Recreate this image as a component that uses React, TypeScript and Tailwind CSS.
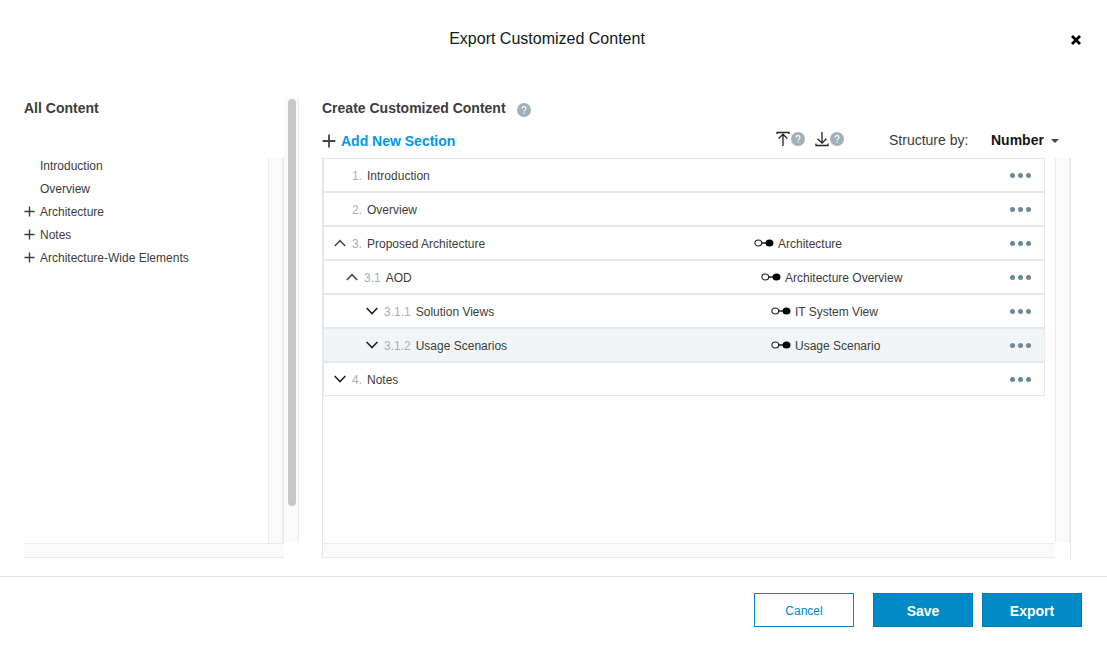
import { useState } from "react";

type TreeItem = { label: string; expandable: boolean };

type Section = {
  number: string;
  title: string;
  level: 0 | 1 | 2;
  toggle?: "open" | "closed";
  mapping?: string;
  selected?: boolean;
};

const treeItems: TreeItem[] = [
  { label: "Introduction", expandable: false },
  { label: "Overview", expandable: false },
  { label: "Architecture", expandable: true },
  { label: "Notes", expandable: true },
  { label: "Architecture-Wide Elements", expandable: true },
];

const sections: Section[] = [
  { number: "1.", title: "Introduction", level: 0 },
  { number: "2.", title: "Overview", level: 0 },
  { number: "3.", title: "Proposed Architecture", level: 0, toggle: "open", mapping: "Architecture" },
  { number: "3.1", title: "AOD", level: 1, toggle: "open", mapping: "Architecture Overview" },
  { number: "3.1.1", title: "Solution Views", level: 2, toggle: "closed", mapping: "IT System View" },
  { number: "3.1.2", title: "Usage Scenarios", level: 2, toggle: "closed", mapping: "Usage Scenario", selected: true },
  { number: "4.", title: "Notes", level: 0, toggle: "closed" },
];

const titleIndent = ["pl-[10px]", "pl-[22px]", "pl-[42px]"];
const mappingIndent = ["pl-0", "pl-[7px]", "pl-[17px]"];

function PlusIcon({ className }: { className: string }) {
  return (
    <svg viewBox="0 0 14 14" className={className} fill="none" stroke="currentColor" strokeWidth="1.8" aria-hidden="true">
      <path d="M7 .6v12.8M.6 7h12.8" />
    </svg>
  );
}

function Chevron({ open }: { open: boolean }) {
  return (
    <svg
      viewBox="0 0 12 8"
      className={open ? "h-2 w-3 text-[#4a4a4a]" : "h-2 w-3 text-[#1c2424]"}
      fill="none"
      stroke="currentColor"
      strokeWidth="1.6"
      aria-hidden="true"
    >
      <path d={open ? "M0.8 7 6 1.6 11.2 7" : "M0.6 1 6 6.6 11.4 1"} />
    </svg>
  );
}

function LinkIcon() {
  return (
    <svg viewBox="0 0 20 8" className="h-2 w-5 shrink-0" aria-hidden="true">
      <ellipse cx="4.3" cy="4" rx="3.4" ry="3" fill="#fff" stroke="#222" strokeWidth="1.1" />
      <path d="M7.8 4h5" stroke="#000" strokeWidth="1.3" />
      <ellipse cx="15.5" cy="4" rx="4" ry="3.6" fill="#000" />
    </svg>
  );
}

function HelpBadge({ label }: { label: string }) {
  return (
    <button type="button" aria-label={label} className="block h-[14px] w-[14px] shrink-0">
      <svg viewBox="0 0 14 14" className="h-full w-full" fill="none">
        <circle cx="7" cy="7" r="7" fill="#a1b0b9" />
        <path
          d="M5 5.6c0-1.3.8-2 2-2s2 .7 2 1.8c0 1.5-1.9 1.4-1.9 3"
          stroke="#fff"
          strokeWidth="1.1"
        />
        <circle cx="7.1" cy="10.1" r="0.7" fill="#fff" />
      </svg>
    </button>
  );
}

function ImportIcon() {
  return (
    <svg viewBox="0 0 14 16" className="h-4 w-[14px]" fill="none" stroke="#222" strokeWidth="1.3" aria-hidden="true">
      <path d="M1 3V1.5h12V3M7 15V3.4M2.6 7.6 7 3.2l4.4 4.4" />
    </svg>
  );
}

function ExportIcon() {
  return (
    <svg viewBox="0 0 14 16" className="h-4 w-[14px]" fill="none" stroke="#222" strokeWidth="1.3" aria-hidden="true">
      <path d="M1 12.6v1.9h12v-1.9M7 1v11.2M2.6 7.8 7 12.2l4.4-4.4" />
    </svg>
  );
}

function HorizontalTrack() {
  return <div className="h-[15px] shrink-0 border-y border-[#ebebeb] bg-[#fafafa]" />;
}

function SectionRow({ section }: { section: Section }) {
  return (
    <li
      className={
        section.selected
          ? "flex h-[34px] items-center border border-[#e4e9ec] bg-[#f1f5f7]"
          : "flex h-[34px] items-center border border-[#e4e9ec] bg-white"
      }
    >
      <div className={`flex min-w-0 flex-1 items-center ${titleIndent[section.level]}`}>
        {section.toggle ? (
          <button
            type="button"
            aria-label={section.toggle === "open" ? `Collapse ${section.title}` : `Expand ${section.title}`}
            aria-expanded={section.toggle === "open"}
            className="w-3"
          >
            <Chevron open={section.toggle === "open"} />
          </button>
        ) : (
          <span className="w-3" />
        )}
        <span className="ml-[6px] pt-[2px] text-[#a9b0b3]">{section.number}</span>
        <span className="ml-[5px] pt-[2px]">{section.title}</span>
      </div>
      <div className={`flex w-[254px] items-center gap-1 ${mappingIndent[section.level]}`}>
        {section.mapping && (
          <>
            <LinkIcon />
            <span className="pt-[2px]">{section.mapping}</span>
          </>
        )}
      </div>
      <button type="button" aria-label={`Options for ${section.title}`} className="mr-3 flex w-6 items-center justify-center gap-[3px]">
        <span className="h-[5px] w-[5px] rounded-full bg-[#6c8796]" />
        <span className="h-[5px] w-[5px] rounded-full bg-[#6c8796]" />
        <span className="h-[5px] w-[5px] rounded-full bg-[#6c8796]" />
      </button>
    </li>
  );
}

export default function App() {
  const [structure, setStructure] = useState("Number");

  return (
    <div
      role="dialog"
      aria-labelledby="dialog-title"
      className="flex min-h-screen flex-col bg-white font-['Liberation_Sans',Arial,sans-serif] text-xs text-[#3c3c3c]"
    >
      <header className="flex items-start pt-7 pr-[21px] pl-6">
        <h1 id="dialog-title" className="flex-1 pt-px pl-1 text-center text-base leading-5 text-[#101818]">
          Export Customized Content
        </h1>
        <button type="button" aria-label="Close" className="flex h-6 w-5 items-center justify-center">
          <svg viewBox="0 0 10 10" className="h-[10px] w-[10px]" stroke="#000" strokeWidth="2.8" aria-hidden="true">
            <path d="M1 1l8 8M9 1l-8 8" />
          </svg>
        </button>
      </header>

      <main className="flex flex-1 pt-[45px] pr-9 pb-[18px] pl-6">
        <section className="flex w-[260px] shrink-0 flex-col" aria-labelledby="all-content">
          <h2 id="all-content" className="h-[61px] pt-px text-sm leading-5 font-bold">
            All Content
          </h2>
          <div className="flex flex-1">
            <ul className="flex-1">
              {treeItems.map((item) => (
                <li key={item.label} className="flex h-[23px] items-start leading-[17px]">
                  <span className="flex w-4 shrink-0">
                    {item.expandable && (
                      <button type="button" aria-label={`Expand ${item.label}`} className="flex h-[15px] items-center">
                        <PlusIcon className="h-[11px] w-[11px]" />
                      </button>
                    )}
                  </span>
                  {item.label}
                </li>
              ))}
            </ul>
            <div className="w-4 shrink-0 border-r-2 border-l border-[#ebebeb] bg-[#fafafa]" />
          </div>
          <HorizontalTrack />
        </section>

        <div className="mb-[15px] flex w-[15px] shrink-0 justify-end border-r border-[#ebebeb] bg-[#fafafa] pt-[2px] pr-[2px] pb-[37px]">
          <div className="w-2 rounded-full bg-[#c8c8c8]" />
        </div>

        <section className="ml-[23px] flex min-w-0 flex-1 flex-col" aria-labelledby="custom-content">
          <div className="flex items-center gap-[11px]">
            <h2 id="custom-content" className="pt-px text-sm leading-5 font-bold">
              Create Customized Content
            </h2>
            <span className="pt-1">
              <HelpBadge label="About customized content" />
            </span>
          </div>
          <div className="flex h-10 items-center pt-[6px]">
            <button type="button" className="flex items-center gap-[5px] text-sm leading-5 font-bold text-[#0099e6]">
              <PlusIcon className="h-[14px] w-[14px] text-[#444]" />
              Add New Section
            </button>
            <div className="mr-[45px] ml-auto flex items-center gap-[10px] pb-1">
              <span className="flex items-center gap-px">
                <button type="button" aria-label="Import">
                  <ImportIcon />
                </button>
                <HelpBadge label="About import" />
              </span>
              <span className="flex items-center gap-px">
                <button type="button" aria-label="Export structure">
                  <ExportIcon />
                </button>
                <HelpBadge label="About export structure" />
              </span>
            </div>
            <label htmlFor="structure" className="w-[102px] pb-[2px] text-sm">
              Structure by:
            </label>
            <div className="relative mr-3 pb-[2px]">
              <select
                id="structure"
                value={structure}
                onChange={(event) => setStructure(event.target.value)}
                className="w-[68px] appearance-none bg-transparent text-sm leading-5 font-bold text-[#101818]"
              >
                <option>Number</option>
                <option>Letter</option>
              </select>
              <svg viewBox="0 0 8 4" className="pointer-events-none absolute top-[9px] right-0 h-1 w-2" fill="#444" aria-hidden="true">
                <path d="M0 0h8L4 4z" />
              </svg>
            </div>
          </div>
          <div className="flex flex-1 flex-col border-x border-[#e4e6e8]">
            <div className="flex flex-1">
              <ol className="mr-[10px] min-w-0 flex-1">
                {sections.map((section) => (
                  <SectionRow key={section.number} section={section} />
                ))}
              </ol>
              <div className="w-[15px] shrink-0 border-x border-[#ebebeb] bg-[#fafafa]" />
            </div>
            <div className="pr-[15px]">
              <HorizontalTrack />
            </div>
          </div>
        </section>
      </main>

      <footer className="flex justify-end border-t border-[#e4e4e4] px-[25px] pt-4 pb-[19px]">
        <button type="button" className="mr-[19px] h-[34px] w-[100px] border border-[#0087c6] bg-white pt-[2px] text-[#0087c6]">
          Cancel
        </button>
        <button type="button" className="mr-[9px] h-[34px] w-[100px] border border-[#007bb5] bg-[#008ac6] pt-[2px] text-sm font-bold text-white">
          Save
        </button>
        <button type="button" className="h-[34px] w-[100px] border border-[#007bb5] bg-[#008ac6] pt-[2px] text-sm font-bold text-white">
          Export
        </button>
      </footer>
    </div>
  );
}
